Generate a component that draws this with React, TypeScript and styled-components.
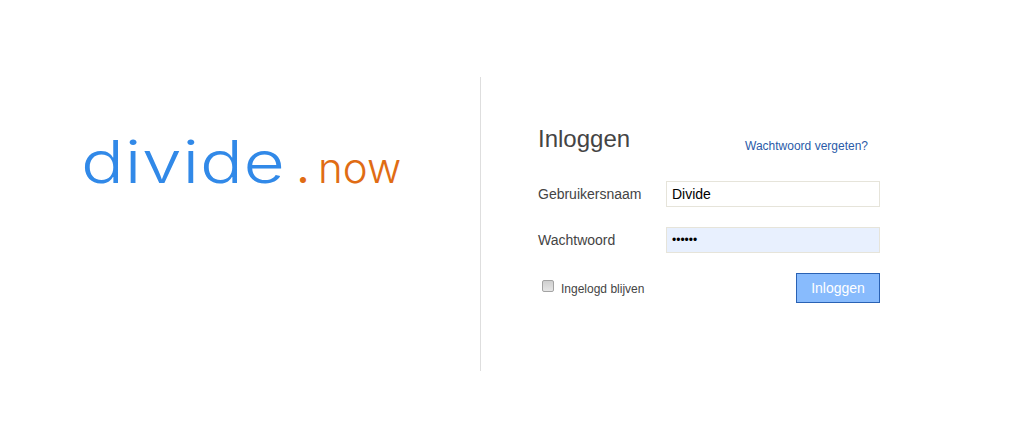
import React from "react";
import styled, { createGlobalStyle } from "styled-components";

const Global = createGlobalStyle`
  html, body { margin: 0; padding: 0; background: #fff; }
  body { font-family: "Liberation Sans", Arial, sans-serif; color: #444; }
`;

const Page = styled.main`
  display: flex;
  width: 1029px;
  height: 444px;
  padding-top: 77px;
  box-sizing: border-box;
  overflow: hidden;
`;

const LogoColumn = styled.section`
  width: 481px;
  height: 294px;
  box-sizing: border-box;
  border-right: 1px solid #dedede;
  padding: 45px 0 0 81px;
`;

const Logo = styled.div`
  display: flex;
  align-items: baseline;
  white-space: nowrap;
  font-family: "Inter", "Liberation Sans", sans-serif;
  font-weight: 300;
  line-height: 80px;
`;

const LogoMain = styled.span`
  display: inline-block;
  width: 210px;
  font-size: 59px;
  letter-spacing: 0.6px;
  color: #3189e8;
  transform: scaleX(1.21);
  transform-origin: left center;
`;

const LogoDot = styled.span`
  font-size: 36px;
  font-weight: 700;
  color: #e06c14;
  margin-left: 6px;
`;

const LogoNow = styled.span`
  font-size: 42px;
  letter-spacing: 0.1px;
  color: #e06c14;
  margin-left: 9px;
`;

const FormColumn = styled.form`
  width: 342px;
  margin-left: 57px;
  padding-top: 48px;
`;

const Header = styled.header`
  display: flex;
  justify-content: space-between;
  align-items: flex-start;
  height: 56px;
  padding-right: 12px;
`;

const Title = styled.h1`
  margin: 0;
  font-size: 24px;
  font-weight: 400;
  line-height: 28px;
  color: #444;
`;

const ForgotLink = styled.a`
  margin-top: 14px;
  font-size: 12px;
  line-height: 14px;
  color: #2a5ba8;
  text-decoration: none;
`;

const Row = styled.div`
  display: flex;
  align-items: center;
  height: 26px;
  margin-bottom: 20px;
`;

const Label = styled.label`
  width: 128px;
  font-size: 14px;
  color: #444;
`;

const Input = styled.input<{ $filled?: boolean }>`
  width: 214px;
  height: 26px;
  box-sizing: border-box;
  padding: 0 5px;
  border: 1px solid #e6e4da;
  background: ${(p) => (p.$filled ? "#e8f0fe" : "#fff")};
  font-family: "Liberation Sans", Arial, sans-serif;
  font-size: ${(p) => (p.$filled ? "12px" : "14px")};
  color: #000;
  outline: none;
  border-radius: 0;
`;

const Footer = styled.div`
  display: flex;
  justify-content: space-between;
  align-items: center;
  height: 30px;
`;

const Remember = styled.label`
  display: flex;
  align-items: center;
  padding-left: 4px;
  padding-top: 1px;
  font-size: 12px;
  color: #444;
`;

const Checkbox = styled.input`
  appearance: none;
  width: 12px;
  height: 12px;
  margin: 0 7px 5px 0;
  box-sizing: border-box;
  border: 1px solid #a3a3a3;
  border-radius: 2px;
  background: linear-gradient(#cfcfcf, #e6e6e6);
`;

const Submit = styled.button`
  width: 84px;
  height: 30px;
  box-sizing: border-box;
  border: 1px solid #2a62b4;
  background: #88bbfd;
  color: #fff;
  font-family: "Liberation Sans", Arial, sans-serif;
  font-size: 14px;
  padding: 0;
`;

export default function App() {
  return (
    <>
      <Global />
      <Page>
        <LogoColumn>
          <Logo>
            <LogoMain>divide</LogoMain>
            <LogoDot>.</LogoDot>
            <LogoNow>now</LogoNow>
          </Logo>
        </LogoColumn>
        <FormColumn onSubmit={(e) => e.preventDefault()}>
          <Header>
            <Title>Inloggen</Title>
            <ForgotLink href="#">Wachtwoord vergeten?</ForgotLink>
          </Header>
          <Row>
            <Label htmlFor="user">Gebruikersnaam</Label>
            <Input id="user" type="text" defaultValue="Divide" />
          </Row>
          <Row>
            <Label htmlFor="pass">Wachtwoord</Label>
            <Input id="pass" type="password" defaultValue="secret" $filled />
          </Row>
          <Footer>
            <Remember>
              <Checkbox type="checkbox" />
              Ingelogd blijven
            </Remember>
            <Submit type="submit">Inloggen</Submit>
          </Footer>
        </FormColumn>
      </Page>
    </>
  );
}
